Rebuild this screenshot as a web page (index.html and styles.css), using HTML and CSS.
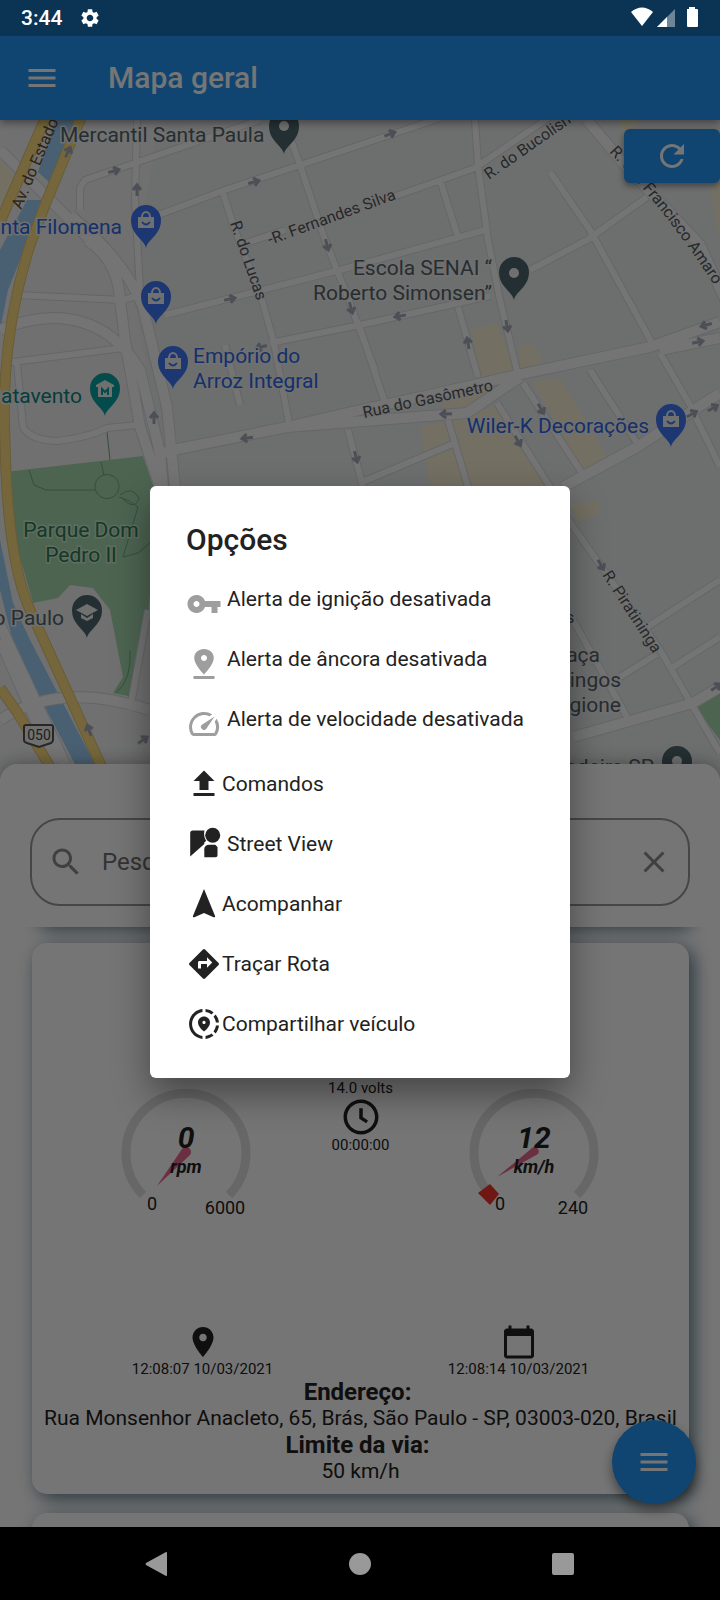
FILE: index.html
```html
<!DOCTYPE html>
<html lang="pt-BR">
<head>
  <meta charset="UTF-8">
  <meta name="viewport" content="width=device-width, initial-scale=1">
  <title>Mapa geral</title>
  <link rel="stylesheet" href="styles.css">
</head>
<body>
  <div class="screen">
    <div class="status-bar">
      <span class="clock">3:44</span>
      <svg class="status-gear" viewBox="0 0 24 24"><path d="M19.14 12.94c.04-.3.06-.61.06-.94 0-.32-.02-.64-.07-.94l2.03-1.58c.18-.14.23-.41.12-.61l-1.92-3.32c-.12-.22-.37-.29-.59-.22l-2.39.96c-.5-.38-1.03-.7-1.62-.94l-.36-2.54c-.04-.24-.24-.41-.48-.41h-3.84c-.24 0-.43.17-.47.41l-.36 2.54c-.59.24-1.13.57-1.62.94l-2.39-.96c-.22-.08-.47 0-.59.22L2.74 8.87c-.12.21-.08.47.12.61l2.03 1.58c-.05.3-.09.63-.09.94s.02.64.07.94l-2.03 1.58c-.18.14-.23.41-.12.61l1.92 3.32c.12.22.37.29.59.22l2.39-.96c.5.38 1.03.7 1.62.94l.36 2.54c.05.24.24.41.48.41h3.84c.24 0 .44-.17.47-.41l.36-2.54c.59-.24 1.13-.56 1.62-.94l2.39.96c.22.08.47 0 .59-.22l1.92-3.32c.12-.22.07-.47-.12-.61l-2.01-1.58zM12 15.6c-1.98 0-3.6-1.62-3.6-3.6s1.62-3.6 3.6-3.6 3.6 1.62 3.6 3.6-1.62 3.6-3.6 3.6z"/></svg>
      <svg class="status-icons" viewBox="0 0 68 22">
        <path d="M0 5C7-1 15-1 22 5L11 19z"/>
        <path d="M26 20L44 2v18z" opacity=".4"/>
        <path d="M26 20L36 10v10z"/>
        <path d="M56 2h2V0h6v2h2q1 0 1 1v16q0 1-1 1H57q-1 0-1-1V3z"/>
      </svg>
    </div>

    <header class="app-bar">
      <button type="button" class="icon-button" aria-label="Menu">
        <svg class="icon" viewBox="0 0 24 24"><path d="M3 18h18v-2H3v2zm0-5h18v-2H3v2zm0-7v2h18V6H3z"/></svg>
      </button>
      <h1>Mapa geral</h1>
    </header>

    <div class="map">
      <svg class="map-canvas" viewBox="0 120 720 668" preserveAspectRatio="xMidYMin slice">
        <defs>
          <path id="arrow" d="M-6 0H5M0-4L5 0L0 4"/>
          <path id="pin" d="M0 22C-2 13-15 9-15-6A15 15 0 0 1 15-6C15 9 2 13 0 22z"/>
          <g id="bag"><path class="glyph" d="M-8-6H8V5H-8z"/><path class="glyph-line" d="M-4-6A4 5 0 0 1 4-6"/><path class="bag-smile" d="M-4-1Q0 4 4-1"/></g>
          <path id="amaro" d="M609 152L637 182Q680 232 716 288"/>
        </defs>

        <!-- areas -->
        <path class="block" d="M0 120H160L130 280L170 487L150 788H0z"/>
        <path class="water" d="M55 120H80L49 182L38 172zM27 200H42L28 240L8 290L0 330V250zM0 540L13 603L30 640L98 770H78L15 650L0 590z"/>
        <path class="park" d="M5 472L143 456L158 500L146 640L133 697L113 693L123 677L110 610L93 588L70 585L58 598L33 603L18 550zM695 707L720 690V740z"/>
        <path class="shop" d="M472 330L497 323L517 373L480 378zM520 345H535L545 368L520 373zM532 382L560 378L607 457L585 473zM420 427L447 420L500 405L545 485H430zM437 387L500 383L480 405L445 410zM570 505L600 500L598 515L578 522zM618 120H640L625 140zM0 160L20 180L8 210L0 215zM710 190L720 180V240z"/>
        <path class="trail" d="M29 470L34 485L46 490H95M101 462L104 475M107 432L110 460M95 485A12 12 0 1 1 119 488A12 12 0 1 1 95 485M119 497Q130 500 138 507L123 557L138 553L150 543M120 495Q132 485 139 498Q135 512 121 497M130 650Q132 680 116 693"/>

        <!-- streets: casing first, fill over it -->
        <g class="casing">
          <path class="minor" d="M137 120L135 200L140 290M80 210V188L85 180L135 163L260 120M145 220L225 190L360 145L440 118M284 120L300 165L325 240L345 290L375 370M222 190L235 230L262 300L274 343L289 423M165 315L340 270L485 230M240 245L285 230M393 197L475 168L560 110M475 120L478 165L488 240L500 300L518 375M440 180L458 237M550 172L590 230L652 343M530 270L587 240L647 197M270 343L360 325L490 296M360 328L385 403M458 307L478 377M523 383L582 473M497 403L550 487M448 420L468 487M360 483L455 443M590 370L637 443M660 353L690 405L720 467M565 515L660 650L720 753M647 627L720 580M673 667L720 637M573 620L627 717M620 677L657 654M348 430L363 487M225 345L240 405M17 295L123 300L140 295M5 363L123 348M17 363L23 427Q30 440 57 441Q90 437 107 428L137 425M148 610L130 710"/>
          <path class="major" d="M173 450L287 427L360 410L430 395L517 375L650 347L720 322M287 427L467 413L520 377M563 487L637 447L720 393M660 350L720 338M573 737L693 703L720 687M587 120L625 165L700 245L730 310M0 150L50 200L97 247M87 240Q118 260 120 300L125 340L140 427L160 487M70 215Q125 260 143 307L167 407L175 487M0 330C60 305 110 320 140 370L160 453L163 487M155 455L175 450M0 720Q60 680 150 710M0 640L55 764M0 625L65 764"/>
        </g>
        <g class="streets">
          <path class="minor" d="M137 120L135 200L140 290M80 210V188L85 180L135 163L260 120M145 220L225 190L360 145L440 118M284 120L300 165L325 240L345 290L375 370M222 190L235 230L262 300L274 343L289 423M165 315L340 270L485 230M240 245L285 230M393 197L475 168L560 110M475 120L478 165L488 240L500 300L518 375M440 180L458 237M550 172L590 230L652 343M530 270L587 240L647 197M270 343L360 325L490 296M360 328L385 403M458 307L478 377M523 383L582 473M497 403L550 487M448 420L468 487M360 483L455 443M590 370L637 443M660 353L690 405L720 467M565 515L660 650L720 753M647 627L720 580M673 667L720 637M573 620L627 717M620 677L657 654M348 430L363 487M225 345L240 405M17 295L123 300L140 295M5 363L123 348M17 363L23 427Q30 440 57 441Q90 437 107 428L137 425M148 610L130 710"/>
          <path class="major" d="M173 450L287 427L360 410L430 395L517 375L650 347L720 322M287 427L467 413L520 377M563 487L637 447L720 393M660 350L720 338M573 737L693 703L720 687M587 120L625 165L700 245L730 310M0 150L50 200L97 247M87 240Q118 260 120 300L125 340L140 427L160 487M70 215Q125 260 143 307L167 407L175 487M0 330C60 305 110 320 140 370L160 453L163 487M155 455L175 450M0 720Q60 680 150 710M0 640L55 764M0 625L65 764"/>
        </g>
        <path class="highway-edge" d="M48 112L0 222M82 115L45 205L30 245Q0 340 5 440C6 500 12 570 30 610L103 770M0 688L17 712L52 770"/>
        <path class="highway" d="M48 112L0 222M82 115L45 205L30 245Q0 340 5 440C6 500 12 570 30 610L103 770M0 688L17 712L52 770"/>

        <g class="arrows">
          <use href="#arrow" transform="translate(114 171) rotate(-15)"/>
          <use href="#arrow" transform="translate(254 182) rotate(-15)"/>
          <use href="#arrow" transform="translate(390 134) rotate(-20)"/>
          <use href="#arrow" transform="translate(137 190) rotate(-90)"/>
          <use href="#arrow" transform="translate(68 152) rotate(-65)"/>
          <use href="#arrow" transform="translate(327 245) rotate(75)"/>
          <use href="#arrow" transform="translate(230 299) rotate(-12)"/>
          <use href="#arrow" transform="translate(351 308) rotate(75)"/>
          <use href="#arrow" transform="translate(261 347) rotate(165)"/>
          <use href="#arrow" transform="translate(154 418) rotate(-90)"/>
          <use href="#arrow" transform="translate(247 438) rotate(172)"/>
          <use href="#arrow" transform="translate(356 457) rotate(75)"/>
          <use href="#arrow" transform="translate(400 316) rotate(170)"/>
          <use href="#arrow" transform="translate(468 343) rotate(-100)"/>
          <use href="#arrow" transform="translate(507 326) rotate(80)"/>
          <use href="#arrow" transform="translate(706 325) rotate(165)"/>
          <use href="#arrow" transform="translate(698 342) rotate(-12)"/>
          <use href="#arrow" transform="translate(541 409) rotate(60)"/>
          <use href="#arrow" transform="translate(518 441) rotate(60)"/>
          <use href="#arrow" transform="translate(446 414) rotate(178)"/>
          <use href="#arrow" transform="translate(692 414) rotate(-30)"/>
          <use href="#arrow" transform="translate(713 408) rotate(-30)"/>
          <use href="#arrow" transform="translate(601 565) rotate(60)"/>
          <use href="#arrow" transform="translate(716 687) rotate(-35)"/>
          <use href="#arrow" transform="translate(143 740) rotate(-35)"/>
          <use href="#arrow" transform="translate(89 730) rotate(-110)"/>
        </g>

        <!-- street names -->
        <g class="street-name">
          <text transform="translate(21 210) rotate(-67)" class="highway-name">Av. do Estado</text>
          <text transform="translate(230 223) rotate(71)">R. do Lucas</text>
          <text transform="translate(270 245) rotate(-20)">-R. Fernandes Silva</text>
          <text transform="translate(489 180) rotate(-35)">R. do Bucolismo</text>
          <text><textPath href="#amaro">R. Cel. Francisco Amaro</textPath></text>
          <text transform="translate(364 418) rotate(-12)">Rua do Gasômetro</text>
          <text transform="translate(602 575) rotate(57)">R. Piratininga</text>
          <text x="566" y="623">s</text>
        </g>

        <!-- places -->
        <g class="place">
          <text x="60" y="142">Mercantil Santa Paula</text>
          <text x="492" y="275" text-anchor="end">Escola SENAI “</text>
          <text x="492" y="300" text-anchor="end">Roberto Simonsen”</text>
          <text x="64" y="625" text-anchor="end">São Paulo</text>
          <text x="600" y="662" text-anchor="end">Praça</text>
          <text x="621" y="687" text-anchor="end">Domingos</text>
          <text x="621" y="712" text-anchor="end">Frangione</text>
          <text x="654" y="774" text-anchor="end">Madeira SP</text>
        </g>
        <g class="place shop-name">
          <text x="122" y="234" text-anchor="end">Santa Filomena</text>
          <text x="193" y="363">Empório do</text>
          <text x="193" y="388">Arroz Integral</text>
          <text x="649" y="433" text-anchor="end">Wiler-K Decorações</text>
        </g>
        <g class="place museum-name"><text x="82" y="403" text-anchor="end">Catavento</text></g>
        <g class="place park-name">
          <text x="81" y="537" text-anchor="middle">Parque Dom</text>
          <text x="81" y="562" text-anchor="middle">Pedro II</text>
        </g>

        <g class="pin-grey">
          <use href="#pin" x="284" y="132"/><circle class="glyph" cx="284" cy="126" r="5"/>
          <use href="#pin" x="514" y="278"/><circle class="glyph" cx="514" cy="273" r="5"/>
          <use href="#pin" x="87" y="616"/><path class="glyph" d="M76 610L87 604L98 610L87 616zM81 614V618L87 621L93 618V614L87 618z"/>
          <use href="#pin" x="677" y="767"/><circle class="glyph" cx="677" cy="761" r="5"/>
        </g>
        <g class="pin-blue">
          <use href="#pin" x="146" y="226"/><use href="#bag" x="146" y="223"/>
          <use href="#pin" x="156" y="302"/><use href="#bag" x="156" y="299"/>
          <use href="#pin" x="173" y="367"/><use href="#bag" x="173" y="364"/>
          <use href="#pin" x="671" y="425"/><use href="#bag" x="671" y="422"/>
        </g>
        <g class="pin-teal">
          <use href="#pin" x="105" y="394"/>
          <path class="glyph" d="M96 385L105 380L114 385V387H96zM98 387H112V397H98z"/>
          <path class="glyph-line" d="M102 395V389L105 392L108 389V395"/>
        </g>
        <path class="shield" d="M26 725H51Q53 725 53 727V740Q53 742 51 743L39 747L27 743Q24 742 24 740V727Q24 725 26 725z"/>
        <text class="shield-text" x="39" y="740" text-anchor="middle">050</text>
      </svg>
      <button type="button" class="refresh" aria-label="Atualizar">
        <svg class="icon" viewBox="0 0 24 24"><path d="M17.65 6.35C16.2 4.9 14.21 4 12 4c-4.42 0-7.99 3.58-7.99 8s3.57 8 7.99 8c3.73 0 6.84-2.55 7.73-6h-2.08c-.82 2.33-3.04 4-5.65 4-3.31 0-6-2.69-6-6s2.69-6 6-6c1.66 0 3.14.69 4.22 1.78L13 11h7V4l-2.35 2.35z"/></svg>
      </button>
    </div>

    <main class="sheet">
      <div class="sheet-header">
        <div class="search">
          <svg class="icon" viewBox="0 0 24 24"><path d="M15.5 14h-.79l-.28-.27C15.41 12.59 16 11.11 16 9.5 16 5.91 13.09 3 9.5 3S3 5.91 3 9.5 5.91 16 9.5 16c1.61 0 3.09-.59 4.23-1.57l.27.28v.79l5 4.99L20.49 19l-4.99-5zm-6 0C7.01 14 5 11.99 5 9.5S7.01 5 9.5 5 14 7.01 14 9.5 11.99 14 9.5 14z"/></svg>
          <input type="text" placeholder="Pesquisar" aria-label="Pesquisar">
          <button type="button" class="icon-button" aria-label="Limpar">
            <svg class="icon" viewBox="0 0 24 24"><path d="M19 6.41L17.59 5 12 10.59 6.41 5 5 6.41 10.59 12 5 17.59 6.41 19 12 13.41 17.59 19 19 17.59 13.41 12z"/></svg>
          </button>
        </div>
      </div>

      <div class="vehicle-list">
        <section class="card card-above"></section>
        <section class="card">
          <div class="gauges">
            <svg class="gauge" viewBox="1 2 150 146">
              <path class="gauge-arc" d="M32 116A60 60 0 1 1 118 116"/>
              <path class="needle" d="M79 76A4 4 0 0 0 71 70L46 107z"/>
              <text class="gauge-value" x="75" y="69">0</text>
              <text class="gauge-unit" x="75" y="94">rpm</text>
              <text class="gauge-limit" x="41" y="131">0</text>
              <text class="gauge-limit" x="114" y="135">6000</text>
            </svg>
            <div class="ignition">
              <span>14.0 volts</span>
              <svg class="icon-large" viewBox="0 0 24 24"><path d="M11.99 2C6.47 2 2 6.48 2 12s4.47 10 9.99 10C17.52 22 22 17.52 22 12S17.52 2 11.99 2zM12 20c-4.42 0-8-3.58-8-8s3.58-8 8-8 8 3.58 8 8-3.58 8-8 8z"/><path d="M11 7h2v5l3 2-1 1.500-4-2.500z"/></svg>
              <span>00:00:00</span>
            </div>
            <svg class="gauge" viewBox="1 2 150 146">
              <path class="gauge-arc" d="M32 116A60 60 0 1 1 118 116"/>
              <path class="marker" d="M31 105L40 115L31 126L19 114z"/>
              <path class="needle" d="M79 75A4 4 0 0 0 72 70L38 98z"/>
              <text class="gauge-value" x="75" y="69">12</text>
              <text class="gauge-unit" x="75" y="94">km/h</text>
              <text class="gauge-limit" x="41" y="131">0</text>
              <text class="gauge-limit" x="114" y="135">240</text>
            </svg>
          </div>
          <div class="dates">
            <div>
              <svg class="icon" viewBox="0 0 24 24"><path d="M12 2C8.13 2 5 5.13 5 9c0 5.25 7 13 7 13s7-7.75 7-13c0-3.87-3.13-7-7-7zm0 9.500c-1.380 0-2.500-1.120-2.500-2.500s1.120-2.500 2.500-2.500 2.500 1.120 2.500 2.500-1.120 2.500-2.500 2.500z"/></svg>
              <span>12:08:07 10/03/2021</span>
            </div>
            <div>
              <svg class="icon" viewBox="0 0 24 24"><path d="M20 3h-1V1h-2v2H7V1H5v2H4c-1.100 0-2 .9-2 2v16c0 1.100.9 2 2 2h16c1.100 0 2-.9 2-2V5c0-1.100-.9-2-2-2zm0 18H4V8h16v13z"/></svg>
              <span>12:08:14 10/03/2021</span>
            </div>
          </div>
          <h2>Endereço:&nbsp;</h2>
          <p>Rua Monsenhor Anacleto, 65, Brás, São Paulo - SP, 03003-020, Brasil</p>
          <h2>Limite da via:&nbsp;</h2>
          <p>50 km/h</p>
        </section>
        <section class="card"></section>
      </div>
      <button type="button" class="fab" aria-label="Ações">
        <svg class="icon" viewBox="0 0 24 24"><path d="M3 18h18v-2H3v2zm0-5h18v-2H3v2zm0-7v2h18V6H3z"/></svg>
      </button>
    </main>

    <nav class="nav-bar">
      <button type="button" aria-label="Voltar"><svg viewBox="0 0 24 24"><path d="M21 0q1 0 1 1v22q0 1-1 1L1 13q-1-1 0-2z"/></svg></button>
      <button type="button" aria-label="Início"><svg viewBox="0 0 24 24"><circle cx="12" cy="12" r="11"/></svg></button>
      <button type="button" aria-label="Recentes"><svg viewBox="0 0 24 24"><rect x="1" y="1" width="22" height="22" rx="2"/></svg></button>
    </nav>

    <div class="scrim">
      <div class="dialog" role="dialog" aria-labelledby="dialogTitle">
        <h2 id="dialogTitle">Opções</h2>
        <button type="button" class="option alert-off">
          <svg class="icon" viewBox="0 0 24 24"><path d="M12.650 10C11.830 7.670 9.610 6 7 6c-3.310 0-6 2.690-6 6s2.690 6 6 6c2.610 0 4.830-1.670 5.650-4H17v4h4v-4h2v-4H12.650zM7 14c-1.100 0-2-.9-2-2s.9-2 2-2 2 .9 2 2-.9 2-2 2z"/></svg>
          <span>Alerta de ignição desativada</span>
        </button>
        <button type="button" class="option alert-off">
          <svg class="icon" viewBox="0 0 24 24"><path d="M18.500 8c0-3.600-2.900-6-6.500-6S5.500 4.400 5.500 8c0 4.500 6.500 11 6.500 11s6.500-6.500 6.500-11zm-8.500 0c0-1.100.9-2 2-2s2 .9 2 2-.89 2-2 2c-1.100 0-2-.9-2-2zM5 20v2h14v-2H5z"/></svg>
          <span>Alerta de âncora desativada</span>
        </button>
        <button type="button" class="option alert-off">
          <svg class="icon" viewBox="0 0 24 24"><path d="M20.380 8.570l-1.230 1.850a8 8 0 0 1-.22 7.580H5.070A8 8 0 0 1 15.580 6.850l1.850-1.230A10 10 0 0 0 3.350 19a2 2 0 0 0 1.720 1h13.850a2 2 0 0 0 1.740-1 10 10 0 0 0-.27-10.440zm-9.790 6.840a2 2 0 0 0 2.830 0l5.660-8.490-8.490 5.660a2 2 0 0 0 0 2.830z"/></svg>
          <span>Alerta de velocidade desativada</span>
        </button>
        <button type="button" class="option">
          <svg class="icon" viewBox="0 0 24 24"><path d="M5 20h14v-2H5v2zm0-10h4v6h6v-6h4l-7-7-7 7z"/></svg>
          <span>Comandos</span>
        </button>
        <button type="button" class="option street-view">
          <svg class="icon" viewBox="0 0 24 24"><path d="M12.300 3H4.500C3.500 3 2.800 3.700 2.800 4.700V20.300L12.200 12V11L13.500 9.800C12 8 11.800 5 12.300 3z"/><circle cx="17.800" cy="6.200" r="5"/><path d="M12.200 20.800V15.500C12.200 13.500 13.500 12.500 15.500 12.500H19.500L21 14V19.300C21 20.300 20.500 20.800 19.500 20.800z"/></svg>
          <span>Street View</span>
        </button>
        <button type="button" class="option">
          <svg class="icon" viewBox="0 0 24 24"><path d="M12 2L4.500 20.290l.71.71L12 18l6.790 3 .71-.71z"/></svg>
          <span>Acompanhar</span>
        </button>
        <button type="button" class="option">
          <svg class="icon" viewBox="0 0 24 24"><path d="M21.710 11.290l-9-9a1 1 0 0 0-1.410 0l-9 9a1 1 0 0 0 0 1.410l9 9c.39.39 1.020.39 1.410 0l9-9a1 1 0 0 0 0-1.410zM14 14.500V12h-4v3H8v-4c0-.55.45-1 1-1h5V7.500l3.500 3.500-3.500 3.500z"/></svg>
          <span>Traçar Rota</span>
        </button>
        <button type="button" class="option">
          <svg class="icon" viewBox="0 0 24 24"><path d="M13.020 19.930v2.020c2.010-.2 3.840-1 5.320-2.210l-1.420-1.430c-1.110.86-2.440 1.440-3.900 1.620zM4.030 12c0-4.050 3.030-7.410 6.950-7.930V2.050C5.950 2.580 2.030 6.840 2.030 12s3.920 9.420 8.950 9.950v-2.020c-3.920-.52-6.950-3.880-6.950-7.930zm15.920-1h2.020c-.2-2.010-1-3.840-2.210-5.320l-1.430 1.430c.86 1.100 1.440 2.430 1.620 3.890zm-1.610-6.740c-1.480-1.210-3.320-2.010-5.320-2.210v2.020c1.460.18 2.790.76 3.900 1.620l1.420-1.430zm-.01 12.640l1.430 1.420c1.210-1.480 2.010-3.310 2.210-5.320h-2.020c-.18 1.460-.76 2.790-1.620 3.900z"/><path d="M16 11.100C16 8.610 14.100 7 12 7s-4 1.610-4 4.100c0 1.660 1.330 3.630 4 5.900 2.670-2.270 4-4.240 4-5.900zm-4 .9c-.59 0-1.070-.48-1.070-1.070s.48-1.070 1.070-1.070 1.070.48 1.070 1.070S12.590 12 12 12z"/></svg>
          <span>Compartilhar veículo</span>
        </button>
      </div>
    </div>
  </div>
</body>
</html>
```
FILE: styles.css
```css
* { box-sizing: border-box; }
body { margin: 0; font-family: Roboto, "Liberation Sans", sans-serif; color: #222; }
button { border: none; padding: 0; background: none; color: inherit; font: inherit; cursor: pointer; }
h1, h2, p { margin: 0; }
svg { display: block; fill: currentColor; }
.icon { width: 36px; height: 36px; flex: none; }
.icon-large { width: 42px; height: 42px; }

.screen { position: relative; display: flex; flex-direction: column; height: 100vh; overflow: hidden; background: #fff; }

/* Status bar */
.status-bar { position: relative; z-index: 6; display: flex; align-items: center; height: 36px; flex: none; padding: 0 21px; background: #0b3454; color: #fff; }
.clock { font-size: 21px; font-weight: 500; }
.status-gear { width: 22px; height: 22px; margin-left: 17px; }
.status-icons { width: 68px; height: 22px; margin-left: auto; }

/* App bar */
.app-bar { position: relative; z-index: 2; display: flex; align-items: center; gap: 48px; height: 84px; flex: none; padding: 0 24px; background: #2196f3; color: #fff; box-shadow: 0 3px 8px rgba(0, 0, 0, .4); }
.app-bar h1 { font-size: 30px; font-weight: 500; line-height: 36px; }

/* Map */
.map { position: relative; flex: 668 1 0; min-height: 0; overflow: hidden; background: #edf1ef; }
.map-canvas { width: 100%; height: 100%; }
.block { fill: #f3f4f4; }
.water { fill: #a0d0f8; }
.park { fill: #a8dab0; }
.shop { fill: #fbf2d6; }
.trail { fill: none; stroke: #6fae80; stroke-width: 1; }
.casing, .streets { fill: none; stroke-linejoin: round; }
.casing { stroke: #dadde0; }
.casing .minor { stroke-width: 8; }
.casing .major { stroke-width: 12; }
.streets { stroke: #fdfdfd; }
.streets .minor { stroke-width: 6; }
.streets .major { stroke-width: 10; }
.highway, .highway-edge { fill: none; stroke: #e2c878; stroke-width: 11; }
.highway { stroke: #ffe082; stroke-width: 9; }
.arrows { fill: none; stroke: #a9adbc; stroke-width: 3; }
.street-name { font-size: 16px; fill: #55585c; stroke: #f3f4f4; stroke-width: 2; paint-order: stroke; }
.highway-name { fill: #6b4c20; stroke: none; }
.place { font-size: 21px; fill: #56646c; stroke: #f3f4f4; stroke-width: 3; paint-order: stroke; }
.shop-name { fill: #2f6ae8; }
.museum-name { fill: #0e8686; }
.park-name { fill: #2a7f4f; stroke: #cfe8d4; }
.pin-grey { fill: #506870; }
.pin-blue { fill: #3f78f8; }
.pin-teal { fill: #0aa6a6; }
.glyph { fill: #f2f4f5; }
.glyph-line { fill: none; stroke: #f2f4f5; stroke-width: 2; }
.bag-smile { fill: none; stroke: #3f78f8; stroke-width: 2; }
.pin-teal .glyph-line { stroke: #0aa6a6; }
.shield { fill: #f3f4f4; stroke: #555; stroke-width: 2; }
.shield-text { font-size: 14px; fill: #444; }
.refresh { position: absolute; top: 9px; right: 0; width: 96px; height: 54px; display: grid; place-items: center; border-radius: 6px; background: #2196f3; color: #fff; box-shadow: 0 3px 6px rgba(0, 0, 0, .4); }

/* Bottom sheet */
.sheet { position: relative; z-index: 1; display: flex; flex-direction: column; flex: 763 1 0; min-height: 0; margin-top: -24px; border-radius: 18px 18px 0 0; background: #fff; box-shadow: 0 0 18px rgba(0, 0, 0, .35); }
.sheet-header { position: relative; z-index: 1; flex: none; padding: 54px 30px 21px; border-radius: 18px 18px 0 0; background: #fff; }
.search { display: flex; align-items: center; gap: 16px; height: 88px; padding: 0 16px; border: 2px solid #9a9a9a; border-radius: 30px; color: #8c8c8c; }
.search input { flex: 1; min-width: 0; border: none; outline: none; background: none; font: inherit; font-size: 24px; }
.search input::placeholder { color: #707070; opacity: 1; }
.vehicle-list { flex: 1; min-height: 0; overflow: hidden; padding: 0 31px 0 32px; }
.card { margin-bottom: 19px; padding: 138px 8px 10px; border-radius: 15px; background: #fff; text-align: center; box-shadow: 5px 5px 18px #607d8b; }
.card-above { height: 150px; margin-top: -153px; }
.card h2 { font-size: 24px; line-height: 28px; font-weight: 700; }
.card p { font-size: 21px; line-height: 25px; }
.gauges { display: flex; justify-content: center; gap: 66px; height: 243px; }
.gauge { width: 150px; height: 146px; text-anchor: middle; }
.gauge-arc { fill: none; stroke: #e0e0e0; stroke-width: 9; }
.needle { fill: #e8688f; }
.marker { fill: #f4302a; }
.gauge-value { font-size: 30px; font-weight: 700; font-style: italic; }
.gauge-unit { font-size: 18px; font-weight: 700; font-style: italic; }
.gauge-limit { font-size: 18px; }
.ignition { display: flex; flex-direction: column; align-items: center; width: 66px; font-size: 15px; line-height: 15px; white-space: nowrap; }
.dates { display: flex; justify-content: center; gap: 176px; font-size: 15px; line-height: 18px; white-space: nowrap; }
.dates div { display: flex; flex-direction: column; align-items: center; width: 140px; }
.fab { position: absolute; right: 24px; bottom: 23px; z-index: 1; display: grid; place-items: center; width: 84px; height: 84px; border-radius: 50%; background: #2196f3; color: #fff; box-shadow: 0 6px 12px rgba(0, 0, 0, .45); }

/* Navigation bar */
.nav-bar { position: relative; z-index: 6; display: grid; grid-template-columns: repeat(3, 1fr); height: 73px; flex: none; padding: 0 56px; background: #000; color: #999; }
.nav-bar svg { width: 24px; height: 24px; margin: auto; }

/* Options dialog */
.scrim { position: absolute; inset: 0; z-index: 5; display: grid; place-items: center; padding: 36px 0 72px; background: rgba(0, 0, 0, .54); }
.dialog { width: 420px; max-width: 90%; padding: 36px 0 24px; border-radius: 6px; background: #fff; box-shadow: 0 16px 36px rgba(0, 0, 0, .4); }
.dialog h2 { padding: 0 36px; margin-bottom: 16px; font-size: 30px; line-height: 36px; font-weight: 500; }
.option { display: flex; align-items: center; width: 100%; padding: 12px 36px; font-size: 21px; line-height: 27px; text-align: left; white-space: nowrap; }
.alert-off { align-items: flex-start; }
.alert-off .icon { color: #9e9e9e; }
.alert-off, .street-view { gap: 5px; }
```
